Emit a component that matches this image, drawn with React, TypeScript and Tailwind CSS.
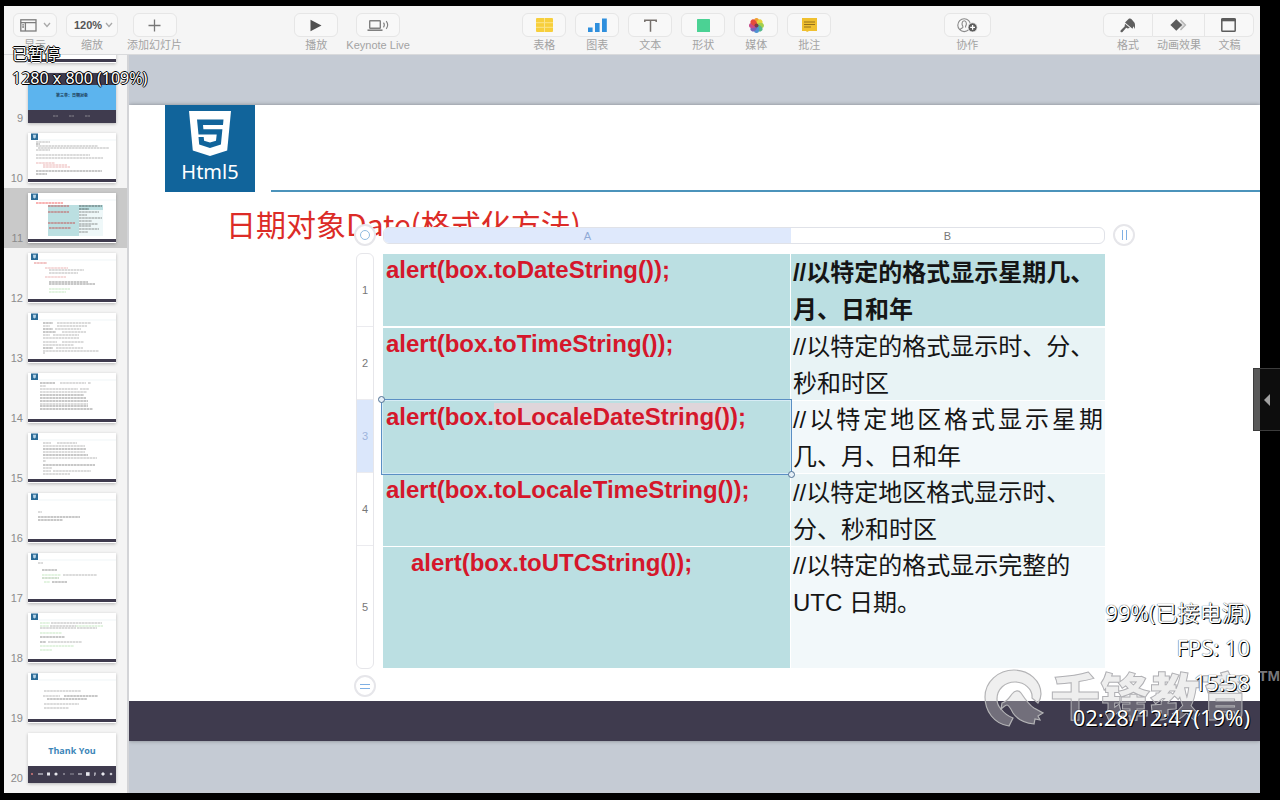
import type { ReactNode } from "react";

type Line = [x: number, y: number, width: number, color: string];

const K = "#8a8a8a";
const D = "#4d4d4d";
const R = "#e08585";
const G = "#9fd99a";

const slides: { id: number; lines: Line[] }[] = [
  { id: 8, lines: [] },
  { id: 9, lines: [] },
  {
    id: 10,
    lines: [
      [8, 9, 14, K], [8, 11, 4, D], [8, 13, 62, K], [10, 15, 71, K], [8, 17, 14, K],
      [8, 22, 54, K], [8, 25, 67, K], [8, 30, 19, R], [15, 32, 24, R], [15, 34, 27, R],
      [8, 38, 66, D], [8, 41, 11, D],
    ],
  },
  { id: 11, lines: [] },
  {
    id: 12,
    lines: [
      [6, 10, 13, "#d63a3a"], [17, 15, 23, R], [21, 17, 35, K], [21, 20, 29, K], [17, 24, 21, R],
      [21, 29, 39, D], [21, 31, 46, D], [21, 36, 21, G], [21, 39, 17, G],
    ],
  },
  {
    id: 13,
    lines: [
      [15, 10, 10, D], [29, 10, 34, K], [15, 13, 7, K], [29, 13, 30, K], [15, 16, 10, D], [27, 16, 26, K],
      [15, 19, 13, D], [34, 19, 24, K], [15, 22, 7, K], [25, 22, 26, K], [15, 25, 36, K],
      [15, 29, 14, K], [34, 29, 22, K], [15, 32, 31, K], [15, 35, 10, D], [28, 35, 27, K], [15, 38, 56, K], [15, 40, 2, K],
    ],
  },
  {
    id: 14,
    lines: [
      [12, 10, 15, D], [32, 10, 26, K], [60, 10, 3, K], [12, 13, 6, K], [12, 16, 38, K], [52, 16, 9, K],
      [12, 19, 47, K], [12, 22, 44, D], [12, 25, 46, D], [12, 28, 48, D], [12, 31, 48, K], [12, 33, 48, D], [12, 36, 53, D],
    ],
  },
  {
    id: 15,
    lines: [
      [15, 10, 8, K], [29, 10, 20, K], [15, 13, 42, K], [15, 16, 43, D], [15, 19, 42, K], [15, 22, 45, D],
      [15, 25, 54, K], [15, 28, 3, K], [15, 32, 52, D], [15, 35, 9, K], [15, 38, 8, K], [25, 38, 38, K], [15, 41, 27, K],
    ],
  },
  { id: 16, lines: [[10, 19, 4, K], [10, 24, 42, D], [10, 27, 25, D]] },
  {
    id: 17,
    lines: [[10, 10, 5, K], [14, 17, 15, D], [14, 22, 19, G], [35, 22, 34, K], [14, 25, 17, "#6b9a62"], [16, 29, 6, G], [24, 29, 15, D]],
  },
  {
    id: 18,
    lines: [
      [12, 10, 10, G], [23, 10, 51, K], [12, 13, 9, G], [22, 13, 26, K], [48, 13, 27, G], [12, 15, 36, K], [49, 15, 20, K],
      [12, 20, 22, G], [12, 24, 25, D], [12, 29, 6, D], [20, 29, 34, K], [12, 33, 34, G], [12, 37, 12, G],
    ],
  },
  {
    id: 19,
    lines: [[16, 18, 37, K], [15, 23, 17, K], [36, 23, 34, D], [19, 26, 40, D], [16, 31, 35, K], [16, 35, 25, K]],
  },
  { id: 20, lines: [] },
];

function TextLines({ lines }: { lines: Line[] }) {
  return (
    <>
      {lines.map(([x, y, w, c], i) => (
        <line key={i} x1={x} x2={x + w} y1={y} y2={y} stroke={c} strokeWidth="1.1" strokeDasharray="2.6 0.5" opacity="0.6" />
      ))}
    </>
  );
}

function Thumbnail({ id, lines }: { id: number; lines: Line[] }) {
  if (id === 9) {
    return (
      <svg viewBox="0 0 88 50" className="block w-full" role="img" aria-label="9">
        <rect width="88" height="50" fill="#3f3b4e" />
        <rect y="12" width="88" height="25" fill="#5cb4ee" />
        <text x="44" y="24" fontSize="4" fontWeight="700" textAnchor="middle" fill="#17354f">第三章：日期对象</text>
        <TextLines lines={[[25, 43, 5, "#bbb"], [41, 43, 5, "#bbb"], [57, 43, 5, "#bbb"]]} />
      </svg>
    );
  }
  if (id === 20) {
    return (
      <svg viewBox="0 0 88 50" className="block w-full" role="img" aria-label="20">
        <rect width="88" height="50" fill="#fff" />
        <text x="44" y="21" fontSize="9" fontWeight="700" textAnchor="middle" fill="#3d86b8" fontFamily="Open Sans">Thank You</text>
        <rect y="33" width="88" height="17" fill="#3f3b4e" />
        <g fill="#e8e8ee">
          <circle cx="4" cy="41" r="1.1" fill="#c77" />
          <rect x="10" y="40.5" width="5" height="1" />
          <rect x="19" y="39.5" width="3" height="3" />
          <circle cx="28" cy="41" r="1.6" />
          <circle cx="36" cy="41" r="1" opacity=".5" />
          <rect x="42" y="40.5" width="4" height="1" opacity=".5" />
          <rect x="50" y="40.5" width="4" height="1" />
          <rect x="58" y="39.2" width="3.6" height="3.6" />
          <path d="M66 39.5h2v1.5l-1 2h-1z" opacity=".6" />
          <path d="M75 39l2 2-2 2-2-2z" />
          <circle cx="83" cy="41" r="1.3" opacity=".8" />
        </g>
      </svg>
    );
  }
  return (
    <svg viewBox="0 0 88 50" className="block w-full" role="img" aria-label={String(id)}>
      <rect width="88" height="50" fill="#fff" />
      <rect y="46" width="88" height="3" fill="#3f3b4e" />
      <rect x="3" y="0.5" width="7" height="6.5" fill="#2d6c97" />
      <path d="M5 1.8h3l-.3 3-1.2.6-1.2-.6z" fill="#b9d4e6" />
      <line x1="11" x2="88" y1="7" y2="7" stroke="#dfe8ee" strokeWidth=".5" />
      {id === 11 && (
        <>
          <rect x="20" y="12" width="31" height="31" fill="#bbdfe1" />
          <rect x="51" y="12" width="24" height="5" fill="#bbdfe1" />
          <rect x="51" y="17" width="24" height="26" fill="#eff8f9" />
          <TextLines
            lines={[
              [8, 10, 27, "#e00"], [20, 13, 21, "#c00"], [20, 19, 21, "#c00"], [20, 30, 27, "#c00"], [21, 35, 22, "#c00"],
              [51, 13, 23, "#111"], [51, 16, 10, "#111"], [51, 19, 20, D], [51, 22, 8, D], [51, 25, 23, D],
              [51, 28, 13, D], [51, 31, 19, D], [51, 33, 12, D], [51, 36, 20, D], [51, 39, 9, D],
            ]}
          />
        </>
      )}
      <TextLines lines={lines} />
    </svg>
  );
}

function Tool({ label, width = "w-11", children }: { label: string; width?: string; children: ReactNode }) {
  return (
    <button type="button" className="flex flex-col items-center">
      <span className={`flex h-6 items-center justify-center rounded-md border border-[#e6e6e6] bg-[#f8f8f8] ${width}`}>{children}</span>
      <span className="text-[11px] leading-4 whitespace-nowrap text-[#a3a3a3]">{label}</span>
    </button>
  );
}

function Segment({ label, shape, children }: { label: string; shape: string; children: ReactNode }) {
  return (
    <button type="button" className="flex flex-col items-center">
      <span className={`flex h-6 items-center justify-center border-y border-r border-[#e6e6e6] bg-[#f8f8f8] ${shape}`}>{children}</span>
      <span className="text-[11px] leading-4 whitespace-nowrap text-[#a3a3a3]">{label}</span>
    </button>
  );
}

const Chevron = () => (
  <svg width="8" height="6" viewBox="0 0 8 6" fill="none" stroke="#a9a9a9" strokeWidth="1.3">
    <path d="M1 1l3 3.5L7 1" />
  </svg>
);

function Toolbar() {
  return (
    <header className="flex shrink-0 items-start justify-between border-b border-[#d9dadc] bg-[#f5f5f5] pt-[7px] pr-[6px] pb-px pl-[9px]">
      <div className="flex items-start gap-[9px]">
        <Tool label="显示">
          <span className="flex items-center gap-1.5">
            <svg width="17" height="13" viewBox="0 0 17 13" fill="none" stroke="#7d7d7d" strokeWidth="1.3">
              <rect x=".8" y=".8" width="15.2" height="11.2" />
              <path d="M.8 3.6H16M5.4 3.6V12M2.2 5.8H4M2.2 8H4" />
            </svg>
            <Chevron />
          </span>
        </Tool>
        <div className="flex flex-col items-center">
          <div className="relative flex h-6 items-center rounded-md border border-[#e6e6e6] bg-[#f8f8f8]">
            <select id="zoom" defaultValue="120" className="w-[50px] appearance-none bg-transparent pl-[7px] text-[11px] leading-4 font-bold text-[#555] outline-none">
              <option value="100">100%</option>
              <option value="120">120%</option>
              <option value="150">150%</option>
            </select>
            <span className="pointer-events-none absolute right-1">
              <Chevron />
            </span>
          </div>
          <label htmlFor="zoom" className="text-[11px] leading-4 text-[#a3a3a3]">缩放</label>
        </div>
        <Tool label="添加幻灯片">
          <svg width="13" height="13" viewBox="0 0 13 13" stroke="#777" strokeWidth="1.3">
            <path d="M6.5.5v12M.5 6.5h12" />
          </svg>
        </Tool>
      </div>

      <div className="flex items-start gap-2">
        <Tool label="播放">
          <svg width="12" height="13" viewBox="0 0 12 13" fill="#4f4f4f">
            <path d="M.5.8l11 5.7-11 5.7z" />
          </svg>
        </Tool>
        <Tool label="Keynote Live">
          <svg width="23" height="13" viewBox="0 0 23 13" fill="none" stroke="#808080" strokeWidth="1.4">
            <rect x="2.7" y="1.7" width="10.6" height="7.6" rx=".5" />
            <path d="M.5 11.2h15" strokeWidth="1.6" />
            <path d="M16.5 3.6c1 1.4 1 3.4 0 4.8M19.2 2.2c1.7 2.2 1.7 5.4 0 7.6" strokeWidth="1.1" />
          </svg>
        </Tool>
      </div>

      <div className="flex items-start gap-[9px]">
        <Tool label="表格">
          <svg width="17" height="14" viewBox="0 0 17 14">
            <rect width="17" height="14" rx="1" fill="#f7cf3c" />
            <path d="M0 4.7h17M0 9.3h17M8.5 0v14" stroke="#fbe48c" strokeWidth="1" />
          </svg>
        </Tool>
        <Tool label="图表">
          <svg width="19" height="14" viewBox="0 0 19 14" fill="#2f8fdd">
            <rect y="9.500" width="4.600" height="4.500" />
            <rect x="7" y="5" width="4.600" height="9" />
            <rect x="14" y=".5" width="4.800" height="13.500" />
          </svg>
        </Tool>
        <Tool label="文本">
          <svg width="13" height="13" viewBox="0 0 13 13" fill="none" stroke="#76706c" strokeWidth="1.5">
            <path d="M.8 3V1.200h11.400V3M6.500 1.200v11.500" />
          </svg>
        </Tool>
        <Tool label="形状">
          <svg width="13" height="13" viewBox="0 0 13 13">
            <rect width="13" height="13" rx=".5" fill="#4bd294" />
          </svg>
        </Tool>
        <Tool label="媒体">
          <svg width="15" height="15" viewBox="-7.5 -7.5 15 15">
            <ellipse cy="-4" rx="2.7" ry="3.5" fill="#f0a030" />
            <ellipse cy="-4" rx="2.7" ry="3.5" fill="#e6d33d" transform="rotate(45)" />
            <ellipse cy="-4" rx="2.7" ry="3.5" fill="#a4cf4b" transform="rotate(90)" />
            <ellipse cy="-4" rx="2.7" ry="3.5" fill="#54b88c" transform="rotate(135)" />
            <ellipse cy="-4" rx="2.7" ry="3.5" fill="#4f92d2" transform="rotate(180)" />
            <ellipse cy="-4" rx="2.7" ry="3.5" fill="#7a62b8" transform="rotate(225)" />
            <ellipse cy="-4" rx="2.7" ry="3.5" fill="#c74b8c" transform="rotate(270)" />
            <ellipse cy="-4" rx="2.7" ry="3.5" fill="#e54b3c" transform="rotate(315)" />
            <circle r="2" fill="#7b3d4c" />
          </svg>
        </Tool>
        <Tool label="批注">
          <svg width="15" height="14" viewBox="0 0 15 14">
            <path d="M0 0h15v13H7l-2 1-1-1H0z" fill="#f0c02f" />
            <path d="M2 4h11M2 6.5h11M2 9h7" stroke="#94701c" strokeWidth="1.1" />
          </svg>
        </Tool>
      </div>

      <Tool label="协作" width="w-[47px]">
        <svg width="21" height="15" viewBox="0 0 21 15" fill="none" stroke="#8a8a8a" strokeWidth="1.1">
          <circle cx="7.2" cy="7.2" r="6.4" />
          <path d="M3 12c.4-1.6 2-1.9 2.800-2.400V8.200C4.600 6.800 4.600 2.800 7.200 2.800s2.600 4 1.400 5.400v1.400" />
          <circle cx="15.600" cy="9.400" r="4.600" fill="#5c5c5c" stroke="#f8f8f8" strokeWidth=".8" />
          <path d="M15.600 7v4.800M13.200 9.400H18" stroke="#fff" strokeWidth="1.300" />
        </svg>
      </Tool>

      <div className="flex items-start">
        <Segment label="格式" shape="w-[50px] rounded-l-md border-l">
          <svg width="16" height="15" viewBox="0 0 16 15" fill="#5f5f5f">
            <path d="M5 4.500L8.800.8c1.200-.8 2.300-.2 3 .8l2.700 3.200c.8 1.200.5 4.200.3 6.200l-1.300-2.800-1 2.600L5 4.500z" />
            <path d="M5 5.800l4.800 4-2 .7-1.600-.8L2.500 14c-1.300 1-2.700-.4-1.700-1.700L4.600 8.500z" />
          </svg>
        </Segment>
        <Segment label="动画效果" shape="w-[52px]">
          <svg width="17" height="12" viewBox="0 0 17 12">
            <path d="M10.500 1l5 5-5 5" fill="#ddd" stroke="#b5b5b5" strokeWidth="1.300" />
            <path d="M6.300.2L12.200 6l-5.900 5.800L.4 6z" fill="#5c5c5c" />
          </svg>
        </Segment>
        <Segment label="文稿" shape="w-[49px] rounded-r-md">
          <svg width="15" height="14" viewBox="0 0 15 14" fill="none" stroke="#5c5c5c">
            <rect x=".8" y=".8" width="13.400" height="12.400" rx=".8" strokeWidth="1.500" />
            <path d="M0 2h15" strokeWidth="2.600" />
          </svg>
        </Segment>
      </div>
    </header>
  );
}

function Navigator() {
  return (
    <aside className="flex w-[125px] shrink-0 flex-col justify-end overflow-hidden border-r-2 border-[#d3d4d7] bg-[#f4f4f4] pb-[5px]">
      {slides.map(({ id, lines }) => (
        <button
          key={id}
          type="button"
          className={`flex h-[60px] w-full shrink-0 items-start pt-[5px] pr-[11px] ${id === 11 ? "bg-[#c9c9c9]" : ""}`}
        >
          {id > 8 && <span className="w-6 shrink-0 self-end pr-[5px] pb-1 text-right text-[11px] leading-3 text-[#8b8b8b]">{id}</span>}
          <span className={`min-w-0 flex-1 shadow-[0_1px_3px_rgba(0,0,0,0.25)] ${id > 8 ? "" : "ml-6"}`}>
            <Thumbnail id={id} lines={lines} />
          </span>
        </button>
      ))}
    </aside>
  );
}

const rows: { code: ReactNode; note: string }[] = [
  { code: "alert(box.toDateString());", note: "//以特定的格式显示星期几、月、日和年" },
  { code: "alert(box.toTimeString());", note: "//以特定的格式显示时、分、秒和时区" },
  {
    code: (
      <>
        alert(box.<span className="bg-[#dfd5da]">toLocaleDateString()</span>);
      </>
    ),
    note: "//以特定地区格式显示星期几、月、日和年",
  },
  { code: "alert(box.toLocaleTimeString());", note: "//以特定地区格式显示时、分、秒和时区" },
  { code: "alert(box.toUTCString());", note: "//以特定的格式显示完整的 UTC 日期。" },
];

const roundHandle = "flex size-[22px] shrink-0 items-center justify-center rounded-full border-2 border-[#e6e6ea] bg-white";

function SlideTable() {
  return (
    <div className="relative -mt-[17px] mr-[125px] ml-[225px] flex items-start pb-1">
      <div className="mr-[7px] flex w-[22px] flex-col items-center">
        <button type="button" aria-label="○" className={roundHandle}>
          <span className="size-[10px] rounded-full border border-[#8fbbe0]" />
        </button>
        <div className="mt-[7px] w-[18px] overflow-hidden rounded-md border border-[#e6e6ea] bg-white text-center text-[11px] text-[#777]">
          {rows.map((_, i) => (
            <div
              key={i}
              className={`flex items-center justify-center ${i < 4 ? "h-[73px] border-b border-[#ebebef]" : "h-[122px]"} ${
                i === 2 ? "bg-[#dbe7fb] text-[#9db4dc]" : ""
              }`}
            >
              {i + 1}
            </div>
          ))}
        </div>
        <button type="button" aria-label="=" className={`mt-[6px] ${roundHandle}`}>
          <span className="h-[5px] w-[10px] border-y border-[#7fb0e4]" />
        </button>
      </div>

      <div className="min-w-0 flex-1">
        <div className="mt-[3px] flex h-[17px] overflow-hidden rounded-md border border-[#e0e2e8] bg-white text-[11px] leading-4">
          <div className="w-[56.5%] bg-[#dfe9fc] text-center text-[#8fa9d6]">A</div>
          <div className="flex-1 text-center text-[#777]">B</div>
        </div>
        <table className="mt-[10px] w-full table-fixed border-separate border-spacing-0">
          <colgroup>
            <col className="w-[56.5%]" />
            <col />
          </colgroup>
          <tbody>
            {rows.map(({ code, note }, i) => (
              <tr key={i} className="align-top">
                <td className={`relative border-r border-white bg-[#bbdfe2] p-0 ${i === 0 ? "border-b-2" : "border-b"}`}>
                  <div
                    className={`leading-8 font-bold whitespace-nowrap text-[#d5172b] text-[24px] ${i === 4 ? "h-[121px] pl-7" : "h-[72px] pl-[3px]"}`}
                  >
                    {code}
                  </div>
                  {i === 2 && (
                    <div className="absolute -inset-x-0.5 -inset-y-0.5 z-10 border border-[#5b8fc4] shadow-[inset_0_0_0_1px_#d7ecf5]">
                      <span className="absolute -top-1 -left-1 size-[7px] rounded-full border border-[#4f6f92] bg-[#e6f0f8]" />
                      <span className="absolute -right-1 -bottom-1 size-[7px] rounded-full border border-[#4f6f92] bg-[#e6f0f8]" />
                    </div>
                  )}
                </td>
                <td
                  className={`border-white p-0 ${
                    i === 0 ? "border-b-2 bg-[#bbdfe2] font-bold" : i % 2 ? "border-b bg-[#e8f3f5]" : "border-b bg-[#f2f8fa]"
                  }`}
                >
                  <div
                    className={`px-0.5 text-[24px] leading-[37px] text-[#151515] ${i === 4 ? "h-[121px]" : "h-[72px]"} ${i === 2 ? "text-justify" : ""}`}
                  >
                    {note}
                  </div>
                </td>
              </tr>
            ))}
          </tbody>
        </table>
      </div>

      <button type="button" aria-label="||" className={`ml-2 ${roundHandle}`}>
        <span className="h-[10px] w-[5px] border-x border-[#7fb0e4]" />
      </button>
    </div>
  );
}

function Slide() {
  return (
    <article className="bg-white shadow-[0_0_4px_rgba(0,0,0,0.35)]">
      <div className="flex items-end pl-9">
        <div className="flex h-[87px] w-[90px] flex-col items-center bg-[#11649b] pt-[6px] text-white">
          <svg width="42" height="45" viewBox="0 0 42 45">
            <path d="M0 0h42l-3.800 39.500L21 45 3.800 39.500z" fill="#fff" />
            <path d="M8 8.500h26.500l-.5 5.500H14l.4 4.300h19l-1.500 15.200L21 37l-10.800-3.500-.7-7.500h5.200l.4 3.700 5.900 1.800 6-1.800.7-6.200H9.500z" fill="#11649b" />
          </svg>
          <span className="mt-0.5 font-['Noto_Sans'] text-[20px] leading-7">Html5</span>
        </div>
        <div className="ml-4 h-0.5 flex-1 bg-[#4b93bb]" />
      </div>
      <h1 className="mt-[13px] pl-[97px] font-['Noto_Sans_CJK_SC'] text-[30px] leading-9 font-normal text-[#dc2c27]">日期对象Date(格式化方法)</h1>
      <SlideTable />
      <div className="h-10 bg-[#3f3b4e]" />
    </article>
  );
}

function Watermark() {
  return (
    <div className="pointer-events-none absolute right-0 bottom-[72px] flex items-center text-[#c8c8c8]/30">
      <svg width="60" height="60" viewBox="0 0 60 60" fill="#d0d0d0" fillOpacity=".35" stroke="#b4b4b6" strokeWidth="1.2">
        <path d="M25 58C10 56 1 43 1 29 1 14 14 2 30 2c15 0 27 11 27 24 0 4-1 6-3 9l-6-5C49 21 40 14 31 14c-10 0-18 7-18 17 0 4 1 7 4 10 3 4 7 7 12 9z" />
        <path d="M18 35c5-1 7-5 10-9 3-4 7-4 9-1 4 6 8 12 13 15l9 5-5 3 2 4-5-1-1 5c-9-1-17-5-21-11-2-4-4-8-6-8-2 0-3 2-6 4z" />
      </svg>
      <span className="ml-1.5 text-[50px] leading-[60px] font-black [-webkit-text-stroke:1px_#b0b0b4]">千锋教育</span>
      <span className="ml-2 self-start text-[15px] leading-4 font-bold text-[#77777a]">TM</span>
    </div>
  );
}

export default function App() {
  return (
    <div className="relative flex h-screen flex-col overflow-hidden bg-black pt-[6px] pr-5 pb-[7px] pl-1 font-['Liberation_Sans','Noto_Sans_CJK_SC',sans-serif]">
      <Toolbar />
      <div className="flex min-h-0 flex-1">
        <Navigator />
        <main className="min-w-0 flex-1 overflow-hidden bg-[#c5cbd4] pt-[50px]">
          <Slide />
        </main>
      </div>

      <Watermark />

      <div className="pointer-events-none absolute top-[42px] left-3 font-['Noto_Sans','Noto_Sans_CJK_SC',sans-serif] text-base leading-6 text-white [text-shadow:1px_0_#000,-1px_0_#000,0_1px_#000,0_-1px_#000]">
        <p>已暂停</p>
        <p>1280 x 800 (109%)</p>
      </div>

      <div className="pointer-events-none absolute right-[30px] bottom-[65px] text-right font-['Noto_Sans','Noto_Sans_CJK_SC',sans-serif] text-[22px] leading-[35px] text-white [text-shadow:1px_1px_#000,0_0_1px_#000]">
        <p>99%(已接电源)</p>
        <p>FPS: 10</p>
        <p>15:58</p>
        <p>02:28/12:47(19%)</p>
      </div>

      <button
        type="button"
        aria-label="◀"
        className="absolute top-[368px] right-0 flex h-[63px] w-[27px] items-center justify-center border-y border-l border-[#3c3c3c] bg-[#121212]/70"
      >
        <svg width="6" height="12" viewBox="0 0 6 12" fill="#a0a0a0">
          <path d="M6 0v12L0 6z" />
        </svg>
      </button>
    </div>
  );
}
